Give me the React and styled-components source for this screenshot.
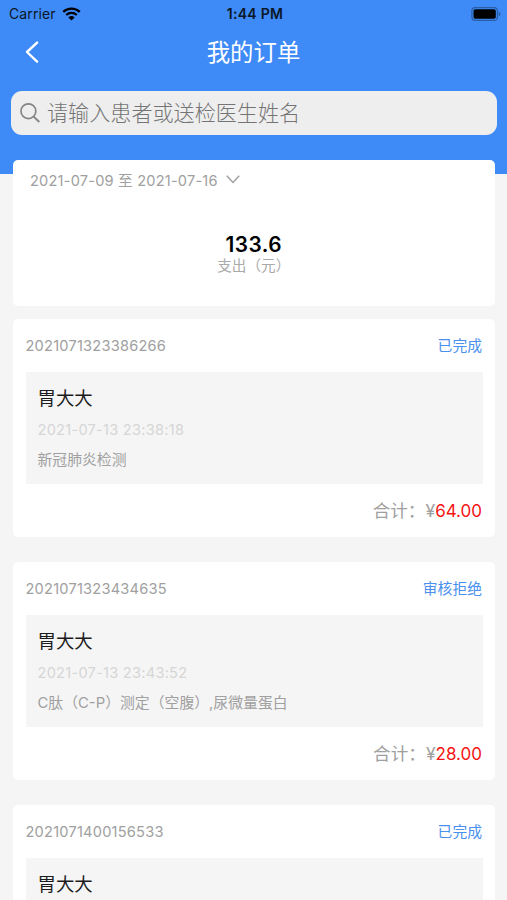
import styled, { createGlobalStyle } from "styled-components";

const GlobalStyle = createGlobalStyle`
  * {
    box-sizing: border-box;
  }
  body {
    margin: 0;
    background: #f5f5f5;
    font-family: Inter, "Noto Sans CJK SC", sans-serif;
    overflow: hidden;
  }
`;

const Page = styled.div`
  width: 507px;
  height: 900px;
  overflow: hidden;
  background: #f5f5f5;
`;

const Header = styled.header`
  height: 174px;
  background: #3e8bf7;
`;

const StatusBar = styled.div`
  display: grid;
  grid-template-columns: 1fr auto 1fr;
  align-items: center;
  height: 27px;
  padding: 0 6px 0 9px;
  color: #0b1626;
`;

const Carrier = styled.div`
  display: flex;
  align-items: center;
  gap: 6px;
  font-size: 14px;
  line-height: 27px;
  letter-spacing: 0.12px;
`;

const Clock = styled.div`
  padding-top: 1px;
  font-size: 14px;
  font-weight: 600;
  line-height: 26px;
  letter-spacing: 0.3px;
`;

const Battery = styled.svg`
  justify-self: end;
`;

const NavBar = styled.div`
  display: grid;
  grid-template-columns: 1fr auto 1fr;
  align-items: center;
  height: 50px;
  padding: 0 24px;
  color: #fff;
`;

const Title = styled.div`
  padding-top: 1px;
  font-size: 23.4px;
  line-height: 49px;
`;

const SearchBox = styled.div`
  display: flex;
  align-items: center;
  height: 44px;
  margin: 14.3px 10px 0 11px;
  padding-left: 8px;
  gap: 6px;
  border-radius: 11px;
  background: #eee;
`;

const Placeholder = styled.span`
  padding-top: 2px;
  font-size: 21.1px;
  font-weight: 300;
  line-height: 42px;
  color: #747474;
`;

const Content = styled.main`
  display: flex;
  flex-direction: column;
  gap: 24.7px;
  margin: -14px 12.5px 0 13px;
`;

const Card = styled.section`
  height: ${(props) => props.$height}px;
  flex-shrink: 0;
  border-radius: 5px;
  background: #fff;
`;

const SummaryCard = styled(Card)`
  margin-bottom: -12.2px;
`;

const DateRange = styled.div`
  display: flex;
  align-items: center;
  height: 40px;
  padding: 0 0 1px 17px;
  gap: 8px;
  font-size: 14.6px;
  letter-spacing: 0.2px;
  color: #a0a0a0;
`;

const Amount = styled.div`
  margin-top: 33px;
  text-align: center;
  font-size: 20.8px;
  font-weight: 600;
  line-height: 24px;
  letter-spacing: 0.5px;
  color: #000;
`;

const AmountLabel = styled.div`
  text-align: center;
  font-size: 14.6px;
  line-height: 18px;
  color: #aaa;
`;

const OrderHead = styled.div`
  display: flex;
  justify-content: space-between;
  align-items: center;
  height: 53.5px;
  padding: 0 12.5px;
`;

const OrderNo = styled.span`
  padding-top: 1px;
  font-size: 14.6px;
  letter-spacing: 0.22px;
  color: #a0a0a0;
`;

const Status = styled.span`
  padding-bottom: 2px;
  font-size: 14.8px;
  color: #4a90ee;
`;

const OrderBody = styled.div`
  height: 111.5px;
  margin: 0 12px 0 12.5px;
  padding: 11px 12px 0;
  background: #f5f5f5;
`;

const Patient = styled.div`
  font-size: 18.4px;
  line-height: 30px;
  color: #1c1c1c;
`;

const Time = styled.div`
  margin-top: 2px;
  font-size: 14.6px;
  line-height: 30px;
  letter-spacing: 0.25px;
  color: #d6d6d6;
`;

const Items = styled.div`
  font-size: 14.85px;
  line-height: 30px;
  color: #a0a0a0;
`;

const Total = styled.div`
  display: flex;
  justify-content: flex-end;
  align-items: baseline;
  height: 53px;
  padding: 14px 12.5px 0 0;
  font-size: 17.6px;
  line-height: 26px;
  color: #a0a0a0;
`;

const Price = styled.span`
  font-size: 17px;
  color: #f51414;
`;

const orders = [
  {
    no: "2021071323386266",
    status: "已完成",
    name: "胃大大",
    time: "2021-07-13 23:38:18",
    items: "新冠肺炎检测",
    price: "64.00",
  },
  {
    no: "2021071323434635",
    status: "审核拒绝",
    name: "胃大大",
    time: "2021-07-13 23:43:52",
    items: "C肽（C-P）测定（空腹）,尿微量蛋白",
    price: "28.00",
  },
  {
    no: "2021071400156533",
    status: "已完成",
    name: "胃大大",
    time: "",
    items: "",
    price: "",
  },
];

const WifiIcon = () => (
  <svg width="19" height="14" viewBox="0 0 19 14" fill="none" stroke="#000">
    <path d="M1.2 4.9a12 12 0 0 1 16.6 0" strokeWidth="2.3" />
    <path d="M4.2 8a7.7 7.7 0 0 1 10.6 0" strokeWidth="2.2" />
    <path d="M9.5 13.6 6.4 10.4a4.5 4.5 0 0 1 6.2 0z" fill="#000" stroke="none" />
  </svg>
);

const OrderCard = ({ order }) => (
  <Card $height={218.5}>
    <OrderHead>
      <OrderNo>{order.no}</OrderNo>
      <Status>{order.status}</Status>
    </OrderHead>
    <OrderBody>
      <Patient>{order.name}</Patient>
      <Time>{order.time}</Time>
      <Items>{order.items}</Items>
    </OrderBody>
    {order.price && (
      <Total>
        合计：¥<Price>{order.price}</Price>
      </Total>
    )}
  </Card>
);

const App = () => {
  return (
    <Page>
      <GlobalStyle />
      <Header>
        <StatusBar>
          <Carrier>
            Carrier
            <WifiIcon />
          </Carrier>
          <Clock>1:44 PM</Clock>
          <Battery width="30" height="14" viewBox="0 0 30 14">
            <rect x="0.9" y="0.7" width="25.5" height="12.6" rx="3.4" fill="none" stroke="#2a5da6" strokeWidth="1.2" />
            <rect x="2.5" y="2.3" width="22.3" height="9.4" rx="1.8" fill="#000" />
            <path d="M27.7 4.8q1.8.5 1.8 2.2t-1.8 2.2z" fill="#2a5da6" />
          </Battery>
        </StatusBar>
        <NavBar>
          <svg width="16" height="24" viewBox="0 0 16 24" fill="none" stroke="#fff" strokeWidth="2.4">
            <path d="M13.1 2.6 3 12l10.1 9.6" strokeLinecap="round" strokeLinejoin="round" />
          </svg>
          <Title>我的订单</Title>
        </NavBar>
        <SearchBox>
          <svg width="22" height="22" viewBox="0 0 22 22" fill="none" stroke="#858585" strokeWidth="1.7">
            <circle cx="9.4" cy="9.2" r="7.4" />
            <path d="m14.7 14.6 5.6 5.4" strokeWidth="2" />
          </svg>
          <Placeholder>请输入患者或送检医生姓名</Placeholder>
        </SearchBox>
      </Header>
      <Content>
        <SummaryCard $height={146}>
          <DateRange>
            2021-07-09 至 2021-07-16
            <svg width="14" height="9" viewBox="0 0 14 9" fill="none" stroke="#a0a0a0" strokeWidth="1.5">
              <path d="m0.8 0.8 6.2 6.6 6.2-6.6" />
            </svg>
          </DateRange>
          <Amount>133.6</Amount>
          <AmountLabel>支出（元）</AmountLabel>
        </SummaryCard>
        {orders.map((order) => (
          <OrderCard key={order.no} order={order} />
        ))}
      </Content>
    </Page>
  );
};

export default App;
